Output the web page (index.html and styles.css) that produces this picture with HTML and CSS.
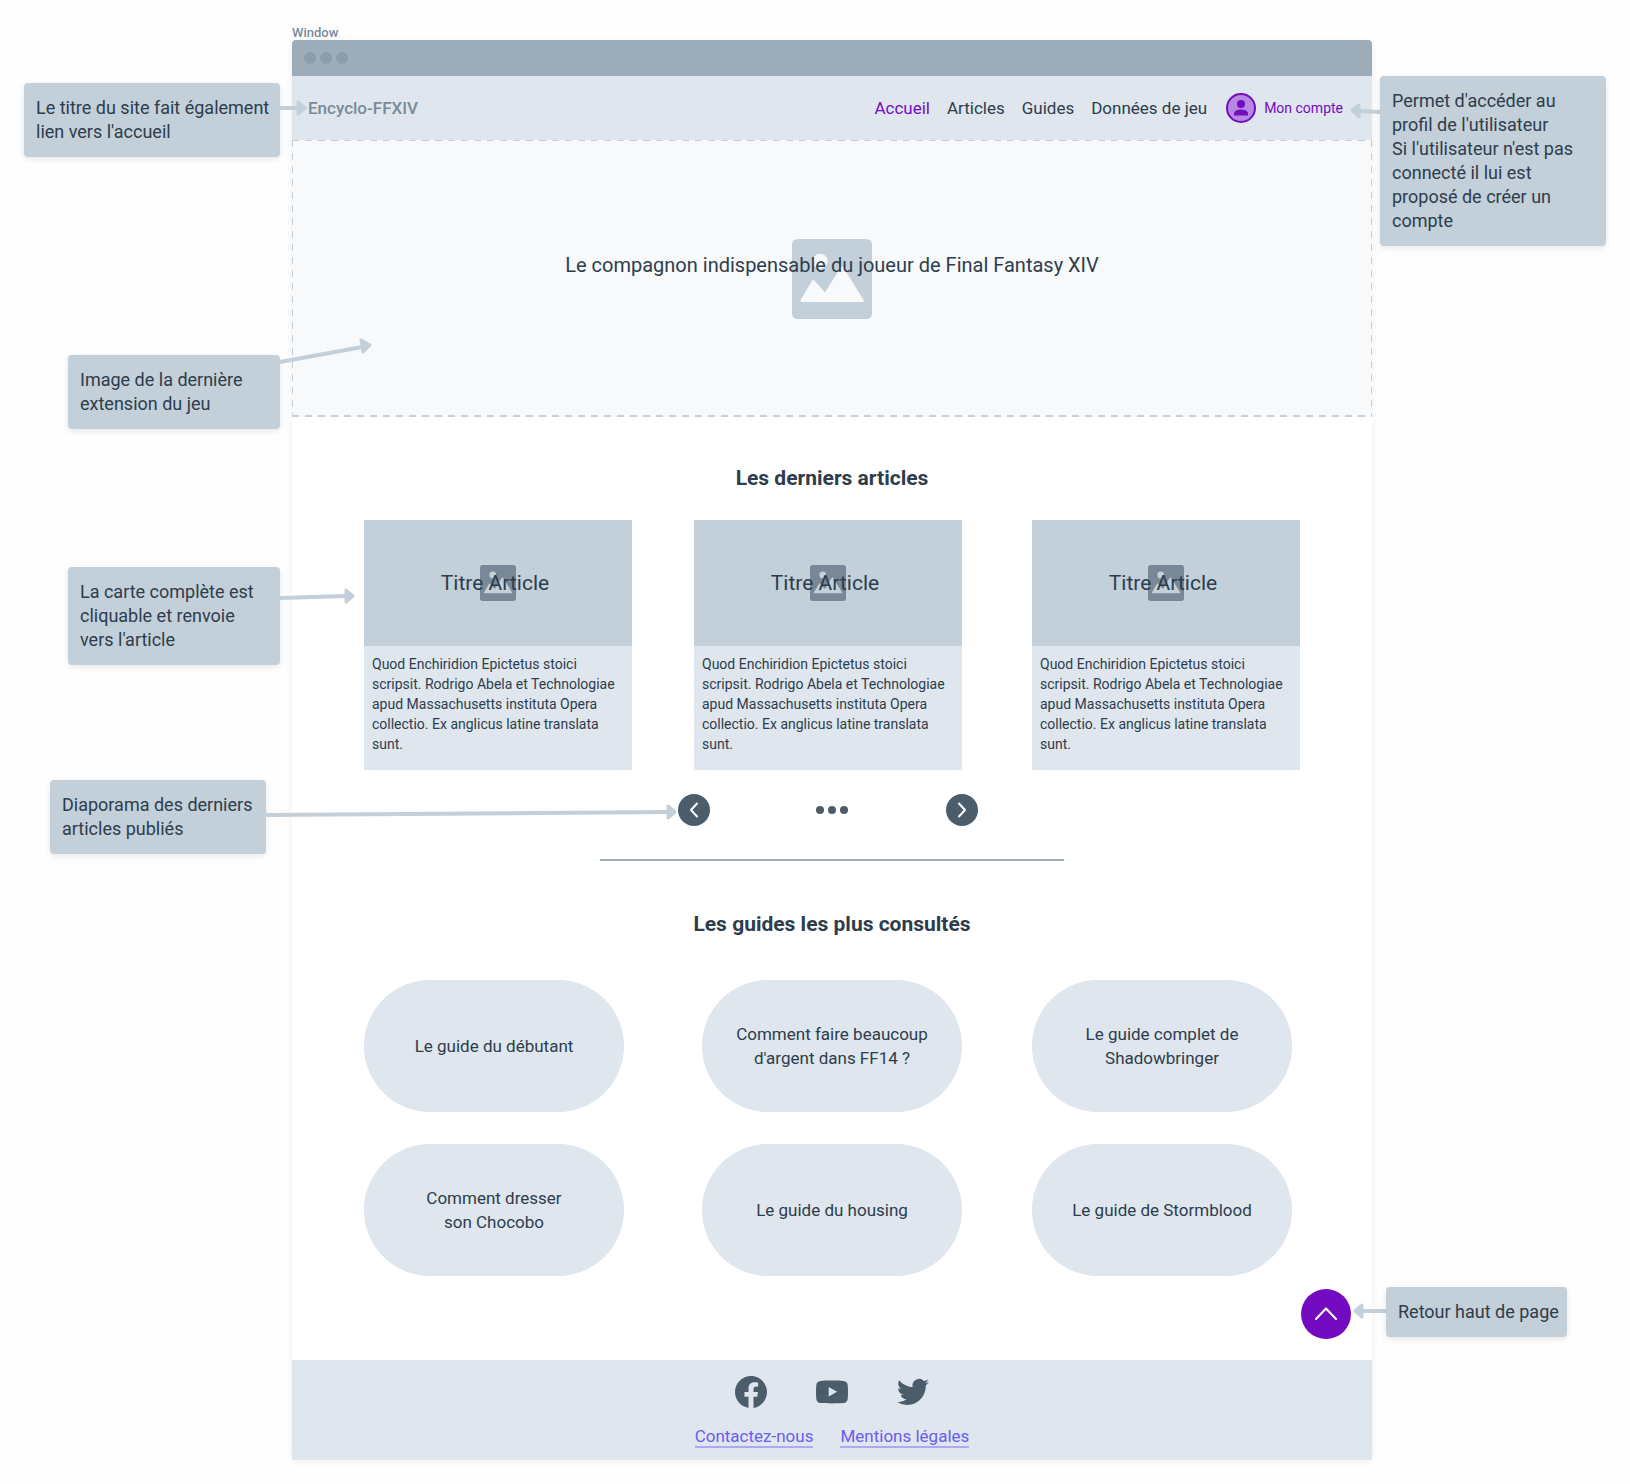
FILE: index.html
```
<!DOCTYPE html>
<html lang="fr">
<head>
<meta charset="utf-8">
<title>Encyclo-FFXIV</title>
<link rel="stylesheet" href="styles.css">
</head>
<body>
<svg class="sprite" aria-hidden="true">
  <defs>
    <symbol id="picture" viewBox="0 0 80 80">
      <path fill-rule="evenodd" d="M6 0H74Q80 0 80 6V74Q80 80 74 80H6Q0 80 0 74V6Q0 0 6 0ZM28.300 14.700A7.500 7.500 0 1 0 28.300 29.700A7.500 7.500 0 1 0 28.300 14.700ZM10 63H70.500Q72.500 63 71.500 61L51.500 28.500Q50 26.500 48.500 28.500L33 53.500L22.500 41.500Q21.300 40 20.200 41.500L8.600 61Q8 63 10 63Z"/>
    </symbol>
  </defs>
</svg>
<div class="canvas">
  <aside class="notes">
    <p class="note note-title">Le titre du site fait également<br>lien vers l'accueil</p>
    <p class="note note-hero">Image de la dernière<br>extension du jeu</p>
    <p class="note note-card">La carte complète est<br>cliquable et renvoie<br>vers l'article</p>
    <p class="note note-slides">Diaporama des derniers<br>articles publiés</p>
  </aside>

  <div class="frame">
    <div class="frame-label">Window</div>
    <div class="window">
      <div class="titlebar"><i></i><i></i><i></i></div>
      <header class="header">
        <a class="brand" href="#">Encyclo-FFXIV</a>
        <nav class="nav">
          <a class="current" href="#">Accueil</a>
          <a href="#">Articles</a>
          <a href="#">Guides</a>
          <a href="#">Données de jeu</a>
        </nav>
        <a class="account" href="#">
          <svg width="30" height="30" viewBox="0 0 30 30" aria-hidden="true"><circle cx="15" cy="15" r="14" fill="#b887e2" stroke="#730bc1" stroke-width="2"/><circle cx="15" cy="11" r="4" fill="#730bc1"/><path d="M8 22v-1.500c0-2.600 4-4 7-4s7 1.400 7 4V22q0 .5-.5.5h-13Q8 22.500 8 22z" fill="#730bc1"/></svg>
          Mon compte
        </a>
      </header>
      <section class="hero">
        <svg class="hero-icon" width="80" height="80" aria-hidden="true"><use href="#picture"/></svg>
        <p class="hero-text">Le compagnon indispensable du joueur de Final Fantasy XIV</p>
      </section>
      <main class="main">
        <h2>Les derniers articles</h2>
        <div class="cards">
          <a class="card" href="#">
            <span class="cover"><svg width="36" height="36" aria-hidden="true"><use href="#picture"/></svg><span class="card-title">Titre Article</span></span>
            <span class="excerpt">Quod Enchiridion Epictetus stoici<br>scripsit. Rodrigo Abela et Technologiae<br>apud Massachusetts instituta Opera<br>collectio. Ex anglicus latine translata<br>sunt.</span>
          </a>
          <a class="card" href="#">
            <span class="cover"><svg width="36" height="36" aria-hidden="true"><use href="#picture"/></svg><span class="card-title">Titre Article</span></span>
            <span class="excerpt">Quod Enchiridion Epictetus stoici<br>scripsit. Rodrigo Abela et Technologiae<br>apud Massachusetts instituta Opera<br>collectio. Ex anglicus latine translata<br>sunt.</span>
          </a>
          <a class="card" href="#">
            <span class="cover"><svg width="36" height="36" aria-hidden="true"><use href="#picture"/></svg><span class="card-title">Titre Article</span></span>
            <span class="excerpt">Quod Enchiridion Epictetus stoici<br>scripsit. Rodrigo Abela et Technologiae<br>apud Massachusetts instituta Opera<br>collectio. Ex anglicus latine translata<br>sunt.</span>
          </a>
        </div>
        <div class="pager">
          <button type="button" aria-label="Précédent"><svg width="32" height="32" viewBox="0 0 32 32" aria-hidden="true"><path d="M19 9.500l-6 6.500 6 6.500"/></svg></button>
          <span class="dots"><i></i><i></i><i></i></span>
          <button type="button" aria-label="Suivant"><svg width="32" height="32" viewBox="0 0 32 32" aria-hidden="true"><path d="M13 9.500l6 6.500-6 6.500"/></svg></button>
        </div>
        <hr>
        <h2>Les guides les plus consultés</h2>
        <div class="guides">
          <a href="#">Le guide du débutant</a>
          <a href="#">Comment faire beaucoup<br>d'argent dans FF14 ?</a>
          <a href="#">Le guide complet de<br>Shadowbringer</a>
          <a href="#">Comment dresser<br>son Chocobo</a>
          <a href="#">Le guide du housing</a>
          <a href="#">Le guide de Stormblood</a>
        </div>
        <button class="to-top" type="button" aria-label="Retour haut de page"><svg width="50" height="50" viewBox="0 0 50 50" aria-hidden="true"><path d="M15 30l10-10.500 10 10.500"/></svg></button>
      </main>
      <footer class="footer">
        <div class="social">
          <a href="#" aria-label="Facebook"><svg width="32" height="32" viewBox="0 0 24 24" aria-hidden="true"><path d="M24 12.073c0-6.627-5.373-12-12-12s-12 5.373-12 12c0 5.990 4.388 10.954 10.125 11.854v-8.385H7.078v-3.470h3.047V9.430c0-3.007 1.792-4.669 4.533-4.669 1.312 0 2.686.235 2.686.235v2.953H15.830c-1.491 0-1.956.925-1.956 1.874v2.250h3.328l-.532 3.470h-2.796v8.385C19.612 23.027 24 18.062 24 12.073z"/></svg></a>
          <a href="#" aria-label="YouTube"><svg width="32" height="32" viewBox="0 0 32 32" aria-hidden="true"><path fill-rule="evenodd" d="M16 4.500c-5 0-9 .1-11.500.4C2 5.200.6 6.600.3 9-.1 13-.1 19 .3 23c.3 2.400 1.700 3.800 4.200 4.100 5 .5 18 .5 23 0 2.500-.3 3.900-1.700 4.200-4.100.4-4 .4-10 0-14-.3-2.400-1.700-3.800-4.200-4.100C25 4.600 21 4.500 16 4.500zM12.700 11v9.400l8.400-4.700z"/></svg></a>
          <a href="#" aria-label="Twitter"><svg width="32" height="32" viewBox="0 0 24 24" aria-hidden="true"><path d="M23.953 4.570a10 10 0 01-2.825.775 4.958 4.958 0 002.163-2.723c-.951.555-2.005.959-3.127 1.184a4.920 4.920 0 00-8.384 4.482C7.690 8.095 4.067 6.130 1.640 3.162a4.822 4.822 0 00-.666 2.475c0 1.710.870 3.213 2.188 4.096a4.904 4.904 0 01-2.228-.616v.060a4.923 4.923 0 003.946 4.827 4.996 4.996 0 01-2.212.085 4.936 4.936 0 004.604 3.417 9.867 9.867 0 01-6.102 2.105c-.390 0-.779-.023-1.170-.067a13.995 13.995 0 007.557 2.209c9.053 0 13.998-7.496 13.998-13.985 0-.210 0-.420-.015-.630A9.935 9.935 0 0024 4.590z"/></svg></a>
        </div>
        <div class="links"><a href="#">Contactez-nous</a><a href="#">Mentions légales</a></div>
      </footer>
    </div>
    <svg class="arrows" aria-hidden="true">
      <g class="shaft"><path d="M-12 108H8M-12 362L70 347M-12 598L54 596M-26 815L376 812"/></g>
      <g class="head">
        <path d="M6 102v12l7-6z"/>
        <path d="M69 340l2 12 7-7z"/>
        <path d="M54 590v12l7-6z"/>
        <path d="M376 806v12l7-6z"/>
      </g>
    </svg>
    <svg class="arrows arrows-end" aria-hidden="true">
      <g class="shaft"><path d="M68 112L46 111M74 1311H50"/></g>
      <g class="head">
        <path d="M47 105v12l-7-7z"/>
        <path d="M50 1305v12l-7-6z"/>
      </g>
    </svg>
  </div>

  <aside class="notes">
    <p class="note note-account">Permet d'accéder au<br>profil de l'utilisateur<br>Si l'utilisateur n'est pas<br>connecté il lui est<br>proposé de créer un<br>compte</p>
    <p class="note note-top">Retour haut de page</p>
  </aside>
</div>
</body>
</html>
```
FILE: styles.css
```
* {
  box-sizing: border-box;
}

body {
  margin: 0;
  background: #fefefe;
  color: #2d3d4c;
  font: 17px/24px Roboto, "Liberation Sans", sans-serif;
}

a {
  color: inherit;
  text-decoration: none;
}

p,
h2 {
  margin: 0;
}

button {
  padding: 0;
  border: 0;
  border-radius: 50%;
}

button svg {
  display: block;
  fill: none;
  stroke: #fff;
  stroke-width: 2;
  stroke-linecap: round;
  stroke-linejoin: round;
}

.sprite {
  position: absolute;
  width: 0;
  height: 0;
}

.canvas {
  display: grid;
  grid-template-columns: 292px minmax(900px, 1fr) 258px;
  padding: 24px 0;
}

/* Annotations, pinned on the free canvas beside the window */
.notes,
.frame {
  position: relative;
}

.note {
  position: absolute;
  padding: 13px 12px;
  border-radius: 4px;
  background: #c3cfd9;
  box-shadow: 0 2px 6px rgba(0, 0, 0, 0.09);
  font-size: 18px;
  white-space: nowrap;
}

.note-title { top: 59px; right: 12px; width: 256px; }
.note-hero { top: 331px; right: 12px; width: 212px; }
.note-card { top: 543px; right: 12px; width: 212px; }
.note-slides { top: 756px; right: 26px; width: 216px; }
.note-account { top: 52px; left: 8px; width: 226px; }
.note-top { top: 1263px; left: 14px; width: 181px; }

.arrows {
  position: absolute;
  top: -24px;
  left: 0;
  width: 400px;
  height: 1460px;
  overflow: visible;
  pointer-events: none;
}

.arrows-end {
  right: -8px;
  left: auto;
  width: 68px;
}

.shaft {
  fill: none;
  stroke: #c3cfd9;
  stroke-width: 4;
}

.head {
  fill: #c3cfd9;
  stroke: #c3cfd9;
  stroke-width: 3;
  stroke-linejoin: round;
}

/* Window */
.frame-label {
  height: 16px;
  color: #7a8b99;
  font-size: 13px;
  font-weight: 500;
  line-height: 18px;
}

.window {
  border-radius: 4px 4px 0 0;
  background: #fff;
  box-shadow: 0 2px 8px rgba(0, 0, 0, 0.06);
}

.titlebar {
  display: flex;
  align-items: center;
  gap: 4px;
  height: 36px;
  padding: 0 12px;
  border-radius: 4px 4px 0 0;
  background: #9dacb9;
}

.titlebar i {
  width: 12px;
  height: 12px;
  border-radius: 50%;
  background: #8c9cab;
}

.header {
  display: flex;
  align-items: center;
  height: 64px;
  padding: 0 29px 0 16px;
  background: #dfe6ee;
}

.brand {
  margin-right: auto;
  color: #7a8b99;
  font-weight: 500;
}

.nav {
  display: flex;
  gap: 17px;
}

.current,
.account {
  color: #730bc1;
}

.account {
  display: flex;
  align-items: center;
  gap: 8px;
  margin-left: 19px;
  font-size: 14px;
}

/* Dashes run 7px on, 6px off along every edge */
.hero {
  display: grid;
  place-items: center;
  height: 277px;
  background:
    repeating-linear-gradient(90deg, #c3cfd9 0 7px, transparent 7px 13px) top / 100% 1px no-repeat,
    repeating-linear-gradient(90deg, #c3cfd9 0 7px, transparent 7px 13px) bottom / 100% 2px no-repeat,
    repeating-linear-gradient(#c3cfd9 0 7px, transparent 7px 13px) left / 1px 100% no-repeat,
    repeating-linear-gradient(#c3cfd9 0 7px, transparent 7px 13px) right / 1px 100% no-repeat,
    #f8f9fb;
}

.hero-icon,
.hero-text {
  grid-area: 1 / 1;
}

.hero-icon {
  fill: #c3cfd9;
}

.hero-text {
  z-index: 1;
  padding-bottom: 28px;
  font-size: 20px;
  line-height: 28px;
}

.main {
  display: flex;
  flex-direction: column;
  padding: 47px 21px 21px 72px;
}

h2 {
  padding-right: 51px;
  font-size: 21px;
  font-weight: 700;
  line-height: 28px;
  text-align: center;
}

.cards {
  display: grid;
  grid-template-columns: 330fr 338fr 268fr;
  margin: 28px 51px 24px 0;
}

.card {
  width: 268px;
  background: #dfe6ee;
}

.cover {
  display: grid;
  place-items: center;
  height: 126px;
  background: #c3cfd9;
  fill: #788896;
}

.cover svg,
.card-title {
  grid-area: 1 / 1;
}

.card-title {
  z-index: 1;
  padding-right: 6px;
  font-size: 21px;
}

.excerpt {
  display: block;
  padding: 8px 8px 16px;
  font-size: 14px;
  line-height: 20px;
  white-space: nowrap;
}

.pager {
  display: flex;
  align-items: center;
  justify-content: space-between;
  align-self: center;
  width: 300px;
  margin-right: 59px;
}

.pager button {
  background: #4b5c6b;
}

.dots {
  display: flex;
  gap: 4px;
  margin-left: 8px;
}

.dots i {
  width: 8px;
  height: 8px;
  border-radius: 50%;
  background: #4b5c6b;
}

hr {
  align-self: center;
  width: 464px;
  height: 2px;
  margin: 33px 51px 49px 0;
  border: 0;
  background: #9dacb9;
}

.guides {
  display: grid;
  grid-template-columns: 338fr 330fr 268fr;
  row-gap: 32px;
  margin: 42px 51px 13px 0;
}

.guides a {
  display: flex;
  align-items: center;
  justify-content: center;
  width: 260px;
  height: 132px;
  border-radius: 66px;
  background: #dfe6ee;
  text-align: center;
}

.to-top {
  align-self: flex-end;
  background: #730bc1;
}

.footer {
  display: flex;
  flex-direction: column;
  align-items: center;
  gap: 16px;
  padding: 16px 0 12px;
  background: #dfe6ee;
}

.social {
  display: flex;
  gap: 49px;
  fill: #4b5c6b;
}

.social svg {
  display: block;
}

.links {
  display: flex;
  gap: 27px;
  color: #6b5cf0;
}

.links a {
  height: 24px;
  border-bottom: 2px solid #b0a9f0;
}
```
